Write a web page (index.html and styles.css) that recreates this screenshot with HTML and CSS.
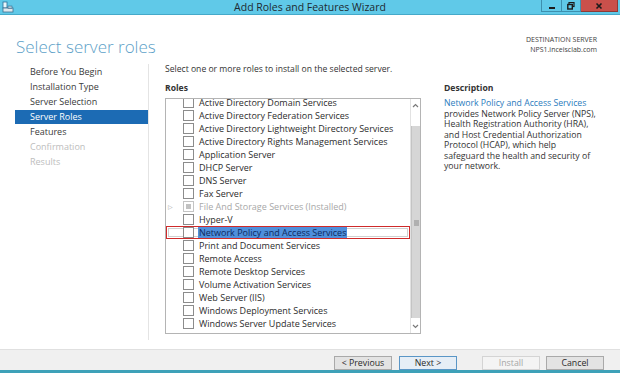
FILE: index.html
```html
<!DOCTYPE html>
<html lang="en">
<head>
    <meta charset="UTF-8">
    <title>Add Roles and Features Wizard</title>
    <link rel="stylesheet" href="styles.css">
</head>
<body>
    <div class="window">
        <!-- Title bar -->
        <div class="titlebar">
            <svg class="app-icon" width="12" height="12" viewBox="0 0 12 12">
                <rect x="1" y="1" width="4" height="6" fill="#e9f6fb" stroke="#2a6f9a" stroke-width="0.8"/>
                <rect x="1" y="7" width="10" height="4" fill="#dfe8ee" stroke="#3c6f8e" stroke-width="0.8"/>
                <rect x="6" y="5" width="4" height="2.5" fill="#a8c6d8" stroke="#3c6f8e" stroke-width="0.6"/>
            </svg>
            <div class="title">Add Roles and Features Wizard</div>
            <div class="controls">
                <span class="ctl ctl-min"><svg width="8" height="8" viewBox="0 0 8 8"><rect x="1" y="5" width="6" height="2" fill="#1b1b1b"/></svg></span>
                <span class="ctl ctl-max"><svg width="8" height="8" viewBox="0 0 8 8"><rect x="2" y="0.5" width="5" height="4" fill="none" stroke="#1b1b1b" stroke-width="1.2"/><rect x="0.8" y="2.5" width="4.5" height="4.5" fill="#5fc9e8" stroke="#1b1b1b" stroke-width="1.4"/></svg></span>
                <span class="ctl ctl-close"><svg width="8" height="8" viewBox="0 0 8 8"><path d="M1.5 1.5 L6.5 6.5 M6.5 1.5 L1.5 6.5" stroke="#1b1b1b" stroke-width="1.6"/></svg></span>
            </div>
        </div>

        <!-- Page header -->
        <div class="header">
            <h1>Select server roles</h1>
            <div class="dest">
                <div>DESTINATION SERVER</div>
                <div>NPS1.inceisclab.com</div>
            </div>
        </div>

        <div class="content">
            <!-- Wizard steps -->
            <ul class="steps">
                <li>Before You Begin</li>
                <li>Installation Type</li>
                <li>Server Selection</li>
                <li class="current">Server Roles</li>
                <li>Features</li>
                <li class="off">Confirmation</li>
                <li class="off">Results</li>
            </ul>

            <div class="main">
                <p class="intro">Select one or more roles to install on the selected server.</p>
                <div class="cols">
                    <div class="roles">
                        <div class="label">Roles</div>
                        <div class="listbox">
                            <div class="items">
                                <div class="row"><span class="exp"></span><span class="check"></span><span class="name">Active Directory Domain Services</span></div>
                                <div class="row"><span class="exp"></span><span class="check"></span><span class="name">Active Directory Federation Services</span></div>
                                <div class="row"><span class="exp"></span><span class="check"></span><span class="name">Active Directory Lightweight Directory Services</span></div>
                                <div class="row"><span class="exp"></span><span class="check"></span><span class="name">Active Directory Rights Management Services</span></div>
                                <div class="row"><span class="exp"></span><span class="check"></span><span class="name">Application Server</span></div>
                                <div class="row"><span class="exp"></span><span class="check"></span><span class="name">DHCP Server</span></div>
                                <div class="row"><span class="exp"></span><span class="check"></span><span class="name">DNS Server</span></div>
                                <div class="row"><span class="exp"></span><span class="check"></span><span class="name">Fax Server</span></div>
                                <div class="row installed"><span class="exp">&#9655;</span><span class="check"><i></i></span><span class="name">File And Storage Services (Installed)</span></div>
                                <div class="row"><span class="exp"></span><span class="check"></span><span class="name">Hyper-V</span></div>
                                <div class="row focus"><span class="exp"></span><span class="check"></span><span class="name sel">Network Policy and Access Services</span></div>
                                <div class="row"><span class="exp"></span><span class="check"></span><span class="name">Print and Document Services</span></div>
                                <div class="row"><span class="exp"></span><span class="check"></span><span class="name">Remote Access</span></div>
                                <div class="row"><span class="exp"></span><span class="check"></span><span class="name">Remote Desktop Services</span></div>
                                <div class="row"><span class="exp"></span><span class="check"></span><span class="name">Volume Activation Services</span></div>
                                <div class="row"><span class="exp"></span><span class="check"></span><span class="name">Web Server (IIS)</span></div>
                                <div class="row"><span class="exp"></span><span class="check"></span><span class="name">Windows Deployment Services</span></div>
                                <div class="row"><span class="exp"></span><span class="check"></span><span class="name">Windows Server Update Services</span></div>
                            </div>
                            <div class="scrollbar">
                                <div class="arrow">
                                    <svg width="7" height="5" viewBox="0 0 7 5"><path d="M1 4 L3.5 1.5 L6 4" fill="none" stroke="#7a7a7a" stroke-width="1.2"/></svg>
                                </div>
                                <div class="track">
                                    <div class="thumb">
                                        <svg width="5" height="6" viewBox="0 0 5 6"><path d="M0 1 H5 M0 3 H5 M0 5 H5" stroke="#8a8a8a" stroke-width="1"/></svg>
                                    </div>
                                </div>
                                <div class="arrow">
                                    <svg width="7" height="5" viewBox="0 0 7 5"><path d="M1 1 L3.5 3.5 L6 1" fill="none" stroke="#7a7a7a" stroke-width="1.2"/></svg>
                                </div>
                            </div>
                        </div>
                    </div>

                    <div class="desc">
                        <div class="label">Description</div>
                        <p><span class="link">Network Policy and Access Services</span><br>
                        provides Network Policy Server (NPS),<br>
                        Health Registration Authority (HRA),<br>
                        and Host Credential Authorization<br>
                        Protocol (HCAP), which help<br>
                        safeguard the health and security of<br>
                        your network.</p>
                    </div>
                </div>
            </div>
        </div>

        <!-- Buttons -->
        <div class="footer">
            <button class="btn">&lt; Previous</button>
            <button class="btn btn-next">Next &gt;</button>
            <button class="btn btn-install" disabled>Install</button>
            <button class="btn btn-cancel">Cancel</button>
        </div>
    </div>
</body>
</html>
```

FILE: styles.css
```css
body {
    margin: 0;
    padding: 0;
    background: #ffffff;
    font-family: "Open Sans", "Noto Sans", sans-serif;
}

.window {
    width: 620px;
    height: 373px;
    display: flex;
    flex-direction: column;
    background: #ffffff;
    overflow: hidden;
}

/* Title Bar */
.titlebar {
    height: 14px;
    background: #60c9e8;
    border-bottom: 1px solid #45a9c9;
    display: grid;
    grid-template-columns: 1fr auto 1fr;
    align-items: center;
}

.app-icon {
    margin-left: 2px;
}

.title {
    font-size: 10.5px;
    color: #1e2a30;
    line-height: 14px;
}

.controls {
    justify-self: end;
    display: flex;
    align-self: start;
    margin-right: 2px;
}

.ctl {
    height: 12px;
    display: flex;
    align-items: center;
    justify-content: center;
    border: 1px solid #3d8fae;
    border-top: none;
    box-sizing: border-box;
}

.ctl-min {
    width: 21px;
}

.ctl-max {
    width: 19px;
    border-left: none;
}

.ctl-close {
    width: 37px;
    background: #c9504b;
    border-color: #8e3a36;
    border-left: none;
}

/* Header */
.header {
    height: 47px;
    box-sizing: border-box;
    padding: 20px 23px 0 16px;
    display: flex;
    justify-content: space-between;
    align-items: flex-start;
}

.header h1 {
    margin: 2px 0 0 0;
    font-size: 17px;
    font-weight: 300;
    line-height: 20px;
    color: #5d9fc8;
}

.dest {
    font-size: 7px;
    line-height: 10px;
    color: #404040;
    text-align: right;
}

/* Content */
.content {
    flex: 1;
    display: flex;
}

.steps {
    list-style: none;
    margin: 2px 0 9px 0;
    padding: 0 0 0 15px;
    width: 133px;
    border-right: 1px solid #e4e4e4;
}

.steps li {
    height: 15px;
    line-height: 15px;
    padding-left: 15px;
    font-size: 9px;
    color: #3a3a3a;
}

.steps li.current {
    background: #1c6bb4;
    color: #ffffff;
    height: 14px;
    line-height: 14px;
    margin: 1px 0 0 0;
}

.steps li.off {
    color: #bdbdbd;
}

.main {
    padding: 1px 0 0 16px;
    flex: 1;
}

.intro {
    margin: 0;
    font-size: 8.6px;
    line-height: 12px;
    color: #333333;
}

.cols {
    display: flex;
    margin-top: 7px;
}

.label {
    font-size: 8.6px;
    font-weight: bold;
    line-height: 12px;
    color: #333333;
}

/* Roles list */
.listbox {
    margin-top: 4px;
    width: 256px;
    height: 236px;
    box-sizing: border-box;
    border: 1px solid #b4b4b4;
    display: flex;
}

.items {
    flex: 1;
    overflow: hidden;
}

.row {
    height: 13px;
    display: flex;
    align-items: center;
    font-size: 9px;
    color: #2c2c2c;
    white-space: nowrap;
}

.row:first-child {
    margin-top: -3px;
}

.exp {
    width: 17px;
    flex: none;
    box-sizing: border-box;
    padding-left: 2px;
    font-size: 6px;
    color: #a0a0a0;
}

.check {
    width: 11px;
    height: 11px;
    flex: none;
    box-sizing: border-box;
    border: 1px solid #8c8c8c;
    background: #ffffff;
    margin-right: 5px;
    display: flex;
    align-items: center;
    justify-content: center;
}

.installed .check {
    border-color: #c4c4c4;
}

.installed .check i {
    width: 5px;
    height: 5px;
    background: #c2c2c2;
}

.installed .name {
    color: #a8a8a8;
}

.row.focus {
    outline: 1.5px solid #cf2a2a;
    outline-offset: -1.5px;
    box-shadow: inset 0 0 0 2px #ffffff, inset 0 0 0 3px #d0d0d0;
}

.name.sel {
    background: #4f8fdb;
    color: #0e2a5e;
    line-height: 11px;
    padding: 0 1px;
    margin-left: -1px;
}

/* Scrollbar */
.scrollbar {
    width: 9px;
    flex: none;
    border-left: 1px solid #e2e2e2;
    display: flex;
    flex-direction: column;
    background: #f6f6f6;
}

.arrow {
    height: 13px;
    display: flex;
    align-items: center;
    justify-content: center;
    background: #ffffff;
}

.track {
    flex: 1;
    padding-top: 14px;
    padding-bottom: 2px;
    display: flex;
    flex-direction: column;
    background: #ffffff;
}

.thumb {
    flex: 1;
    background: #d6d6d6;
    border-left: 1px solid #c4c4c4;
    display: flex;
    align-items: center;
    justify-content: center;
    padding-top: 2px;
}

/* Description */
.desc {
    margin-left: 23px;
    flex: 1;
    white-space: nowrap;
}

.desc p {
    margin: 4px 0 0 0;
    font-size: 8.7px;
    line-height: 10.5px;
    color: #333333;
}

.link {
    color: #2b7bbd;
}

/* Footer */
.footer {
    height: 24px;
    box-sizing: border-box;
    border-top: 1px solid #e0e0e0;
    border-bottom: 3px solid #3ea1b8;
    background: #f0f0f0;
    display: flex;
    justify-content: flex-end;
    align-items: flex-start;
    padding: 6px 16px 0 0;
}

.btn {
    width: 58px;
    height: 14px;
    padding: 0;
    margin: 0 0 0 6px;
    font-family: "Open Sans", "Noto Sans", sans-serif;
    font-size: 8.8px;
    line-height: 12px;
    color: #2a2a2a;
    background: #e3e3e3;
    border: 1px solid #a9a9a9;
}

.btn-next {
    margin-left: 7px;
    background: #e6eef6;
    border-color: #5a96c6;
}

.btn-install {
    margin-left: 25px;
    background: #f4f4f4;
    border-color: #d4d4d4;
    color: #a6a6a6;
}
```
